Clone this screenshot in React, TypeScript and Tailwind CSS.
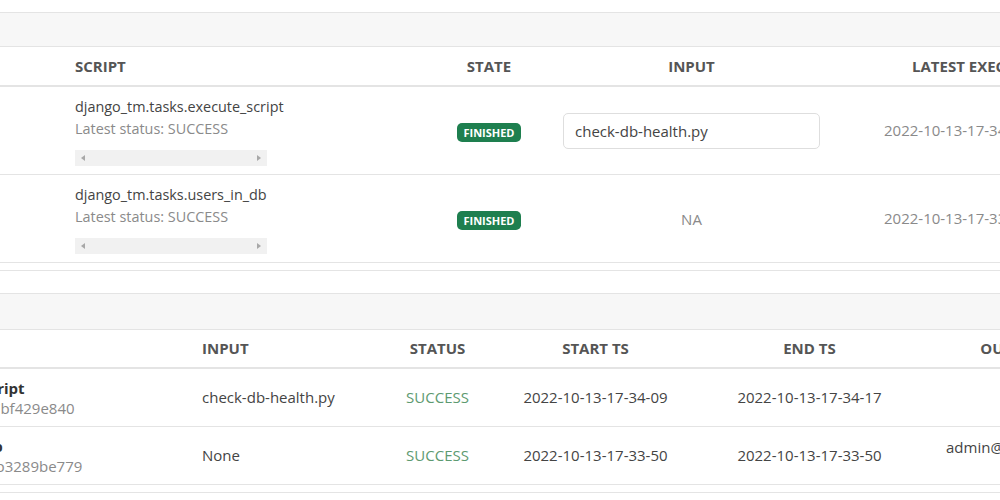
import React from 'react';

type TaskRow = {
  name: string;
  status: string;
  input: string | null;
  latest: string;
};

type ExecRow = {
  task: string;
  uuid: string;
  input: string;
  status: string;
  start: string;
  end: string;
  output: string;
};

const tasks: TaskRow[] = [
  {
    name: 'django_tm.tasks.execute_script',
    status: 'SUCCESS',
    input: 'check-db-health.py',
    latest: '2022-10-13-17-34-17',
  },
  {
    name: 'django_tm.tasks.users_in_db',
    status: 'SUCCESS',
    input: null,
    latest: '2022-10-13-17-33-50',
  },
];

const executions: ExecRow[] = [
  {
    task: 'django_tm.tasks.execute_script',
    uuid: '3f1c2a9e-5d4b-4e8a-9c61-a67bf429e840',
    input: 'check-db-health.py',
    status: 'SUCCESS',
    start: '2022-10-13-17-34-09',
    end: '2022-10-13-17-34-17',
    output: '',
  },
  {
    task: 'django_tm.tasks.users_in_db',
    uuid: '8b2e0c71-4a9d-4f3e-b1d8-d4b3289be779',
    input: 'None',
    status: 'SUCCESS',
    start: '2022-10-13-17-33-50',
    end: '2022-10-13-17-33-50',
    output: 'admin@example.com',
  },
];

const Arrow = ({ dir }: { dir: 'left' | 'right' }) => (
  <svg width="4" height="6" viewBox="0 0 4 6" className="fill-[#a8a8a8]">
    {dir === 'left' ? <path d="M4 0 L0 3 L4 6 Z" /> : <path d="M0 0 L4 3 L0 6 Z" />}
  </svg>
);

// mimics the little horizontal scrollbar under each task name
const ScrollStrip = () => (
  <div className="mt-[10px] flex h-[16px] w-[192px] items-center justify-between bg-[#f1f1f1] px-[6px]">
    <Arrow dir="left" />
    <Arrow dir="right" />
  </div>
);

const th = 'p-0 align-middle text-[15px] font-bold uppercase text-[#555] border-b-2 border-[#e4e4e4]';
const td = 'p-0 align-middle border-b border-[#e4e4e4]';

const App: React.FC = () => {
  return (
    <div className="h-[500px] w-[1000px] overflow-hidden bg-white pt-[12px] font-['Open_Sans',sans-serif] text-[#444]">
      {/* Tasks card */}
      <div className="border-y border-[#e4e4e4] pb-[7px]">
        <div className="h-[34px] border-b border-[#e4e4e4] bg-[#f7f7f7]" />
        <table className="w-[1125px] table-fixed border-separate border-spacing-0">
          <colgroup>
            <col className="w-[60px]" />
            <col className="w-[360px]" />
            <col className="w-[138px]" />
            <col className="w-[267px]" />
            <col className="w-[300px]" />
          </colgroup>
          <thead>
            <tr>
              <th className={`${th} h-[40px]`}></th>
              <th className={`${th} h-[40px] pl-[15px] text-left`}>Script</th>
              <th className={`${th} h-[40px] text-center`}>State</th>
              <th className={`${th} h-[40px] text-center`}>Input</th>
              <th className={`${th} h-[40px] pl-[87px] text-left`}>Latest Execution</th>
            </tr>
          </thead>
          <tbody>
            {tasks.map((t) => (
              <tr key={t.name}>
                <td className={`${td} h-[88px]`}></td>
                <td className={`${td} pl-[15px]`}>
                  <div className="text-[14.4px] leading-[22px] text-[#444]">{t.name}</div>
                  <div className="text-[14.4px] leading-[22px] text-[#8a8a8a]">Latest status: {t.status}</div>
                  <ScrollStrip />
                </td>
                <td className={`${td} text-center`}>
                  <span className="inline-block rounded-[5px] bg-[#1e7f4f] px-[6px] py-[3px] text-[11px] font-bold leading-[13px] text-white">
                    FINISHED
                  </span>
                </td>
                <td className={`${td} text-center`}>
                  {t.input ? (
                    <input
                      readOnly
                      defaultValue={t.input}
                      className="h-[36px] w-[257px] rounded-[5px] border border-[#dedede] bg-white px-[11px] text-[15px] text-[#444] outline-none"
                    />
                  ) : (
                    <span className="text-[15px] text-[#8a8a8a]">NA</span>
                  )}
                </td>
                <td className={`${td} pl-[59px] text-left text-[15px] text-[#8a8a8a]`}>{t.latest}</td>
              </tr>
            ))}
          </tbody>
        </table>
      </div>

      {/* Executions card */}
      <div className="mt-[22px] border-y border-[#e4e4e4] pb-[7px]">
        <div className="h-[36px] border-b border-[#e4e4e4] bg-[#f7f7f7]" />
        <table className="-ml-[225px] w-[1314px] table-fixed border-separate border-spacing-0">
          <colgroup>
            <col className="w-[412px]" />
            <col className="w-[183px]" />
            <col className="w-[135px]" />
            <col className="w-[181px]" />
            <col className="w-[247px]" />
            <col className="w-[156px]" />
          </colgroup>
          <thead>
            <tr>
              <th className={`${th} h-[39px] pl-[15px] text-left`}>Task</th>
              <th className={`${th} h-[39px] pl-[15px] text-left`}>Input</th>
              <th className={`${th} h-[39px] text-center`}>Status</th>
              <th className={`${th} h-[39px] text-center`}>Start TS</th>
              <th className={`${th} h-[39px] text-center`}>End TS</th>
              <th className={`${th} h-[39px] text-center`}>Output</th>
            </tr>
          </thead>
          <tbody>
            {executions.map((e) => (
              <tr key={e.uuid}>
                <td className={`${td} h-[58px] whitespace-nowrap pl-[15px]`}>
                  <div className="text-[15px] font-bold leading-[20px] text-[#333]">{e.task}</div>
                  <div className="text-[15px] leading-[20px] text-[#8a8a8a]">{e.uuid}</div>
                </td>
                <td className={`${td} pl-[15px] text-[15px]`}>{e.input}</td>
                <td className={`${td} text-center text-[15px] text-[#5d9a70]`}>{e.status}</td>
                <td className={`${td} text-center text-[15px]`}>{e.start}</td>
                <td className={`${td} text-center text-[15px]`}>{e.end}</td>
                <td className={`${td} whitespace-nowrap pb-[16px] pl-[13px] text-left text-[15px]`}>{e.output}</td>
              </tr>
            ))}
          </tbody>
        </table>
      </div>
    </div>
  );
};

export default App;
